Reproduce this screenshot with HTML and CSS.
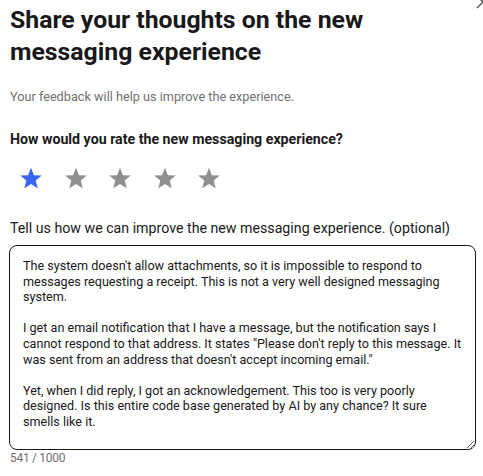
FILE: index.html
```html
<!DOCTYPE html>
<html lang="en">
<head>
  <meta charset="UTF-8">
  <title>Messaging Feedback</title>
  <link rel="stylesheet" href="styles.css">
</head>
<body>

  <div class="dialog">
    <button class="close-btn" aria-label="Close">
      <svg viewBox="0 0 16 16" width="16" height="16"><path d="M2 2 L14 14 M14 2 L2 14" stroke="#555" stroke-width="1.4" fill="none"/></svg>
    </button>

    <h1 class="title">Share your thoughts on the new messaging experience</h1>
    <p class="subtitle">Your feedback will help us improve the experience.</p>

    <h2 class="question">How would you rate the new messaging experience?</h2>
    <div class="stars">
      <button class="star active" aria-label="1 star"><svg viewBox="0 0 24 24"><path d="M12 1.8l2.9 7.4 7.9.4-6.1 5 2 7.7L12 18l-6.7 4.3 2-7.7-6.1-5 7.9-.4z"/></svg></button>
      <button class="star" aria-label="2 stars"><svg viewBox="0 0 24 24"><path d="M12 1.8l2.9 7.4 7.9.4-6.1 5 2 7.7L12 18l-6.7 4.3 2-7.7-6.1-5 7.9-.4z"/></svg></button>
      <button class="star" aria-label="3 stars"><svg viewBox="0 0 24 24"><path d="M12 1.8l2.9 7.4 7.9.4-6.1 5 2 7.7L12 18l-6.7 4.3 2-7.7-6.1-5 7.9-.4z"/></svg></button>
      <button class="star" aria-label="4 stars"><svg viewBox="0 0 24 24"><path d="M12 1.8l2.9 7.4 7.9.4-6.1 5 2 7.7L12 18l-6.7 4.3 2-7.7-6.1-5 7.9-.4z"/></svg></button>
      <button class="star" aria-label="5 stars"><svg viewBox="0 0 24 24"><path d="M12 1.8l2.9 7.4 7.9.4-6.1 5 2 7.7L12 18l-6.7 4.3 2-7.7-6.1-5 7.9-.4z"/></svg></button>
    </div>

    <label class="comment-label" for="comment">Tell us how we can improve the new messaging experience. (optional)</label>
    <textarea id="comment" class="comment">The system doesn't allow attachments, so it is impossible to respond to messages requesting a receipt. This is not a very well designed messaging system.

I get an email notification that I have a message, but the notification says I cannot respond to that address. It states "Please don't reply to this message. It was sent from an address that doesn't accept incoming email."

Yet, when I did reply, I got an acknowledgement. This too is very poorly designed. Is this entire code base generated by AI by any chance? It sure smells like it.</textarea>
    <div class="counter">541 / 1000</div>
  </div>

</body>
</html>
```

FILE: styles.css
```css
body {
  margin: 0;
  font-family: Roboto, "Noto Sans", sans-serif;
  color: #191919;
  background: #fff;
  overflow: hidden;
}

.dialog {
  position: relative;
  padding: 4px 8px 0 10px;
}

.close-btn {
  position: absolute;
  top: -6px;
  right: -8px;
  width: 16px;
  height: 16px;
  padding: 0;
  border: none;
  background: none;
}

.title {
  margin: 0;
  font-size: 24.8px;
  line-height: 32px;
  font-weight: 700;
  width: 400px;
}

.subtitle {
  margin: 19px 0 0;
  font-size: 12.7px;
  line-height: 20px;
  color: #707070;
}

.question {
  margin: 22px 0 0;
  font-size: 14.2px;
  line-height: 20px;
  font-weight: 700;
}

.stars {
  display: flex;
  margin: 17px 0 0 -1px;
}

.star {
  width: 44.5px;
  height: 24px;
  padding: 0;
  border: none;
  background: none;
  display: flex;
  align-items: center;
  justify-content: center;
}

.star svg {
  width: 24px;
  height: 24px;
  fill: #8f8f8f;
}

.star.active svg {
  fill: #3665f3;
}

.comment-label {
  display: block;
  margin-top: 28px;
  font-size: 14.2px;
  line-height: 20px;
}

.comment {
  display: block;
  box-sizing: border-box;
  width: 467px;
  height: 205px;
  margin: 7px 0 0 -1px;
  padding: 12px 13px;
  border: 1.5px solid #191919;
  border-radius: 8px;
  font-family: Roboto, "Noto Sans", sans-serif;
  font-size: 12.6px;
  line-height: 15.6px;
  color: #191919;
  resize: vertical;
  overflow: hidden;
}

.counter {
  font-size: 12px;
  line-height: 16px;
  letter-spacing: -0.3px;
  color: #707070;
}
```
